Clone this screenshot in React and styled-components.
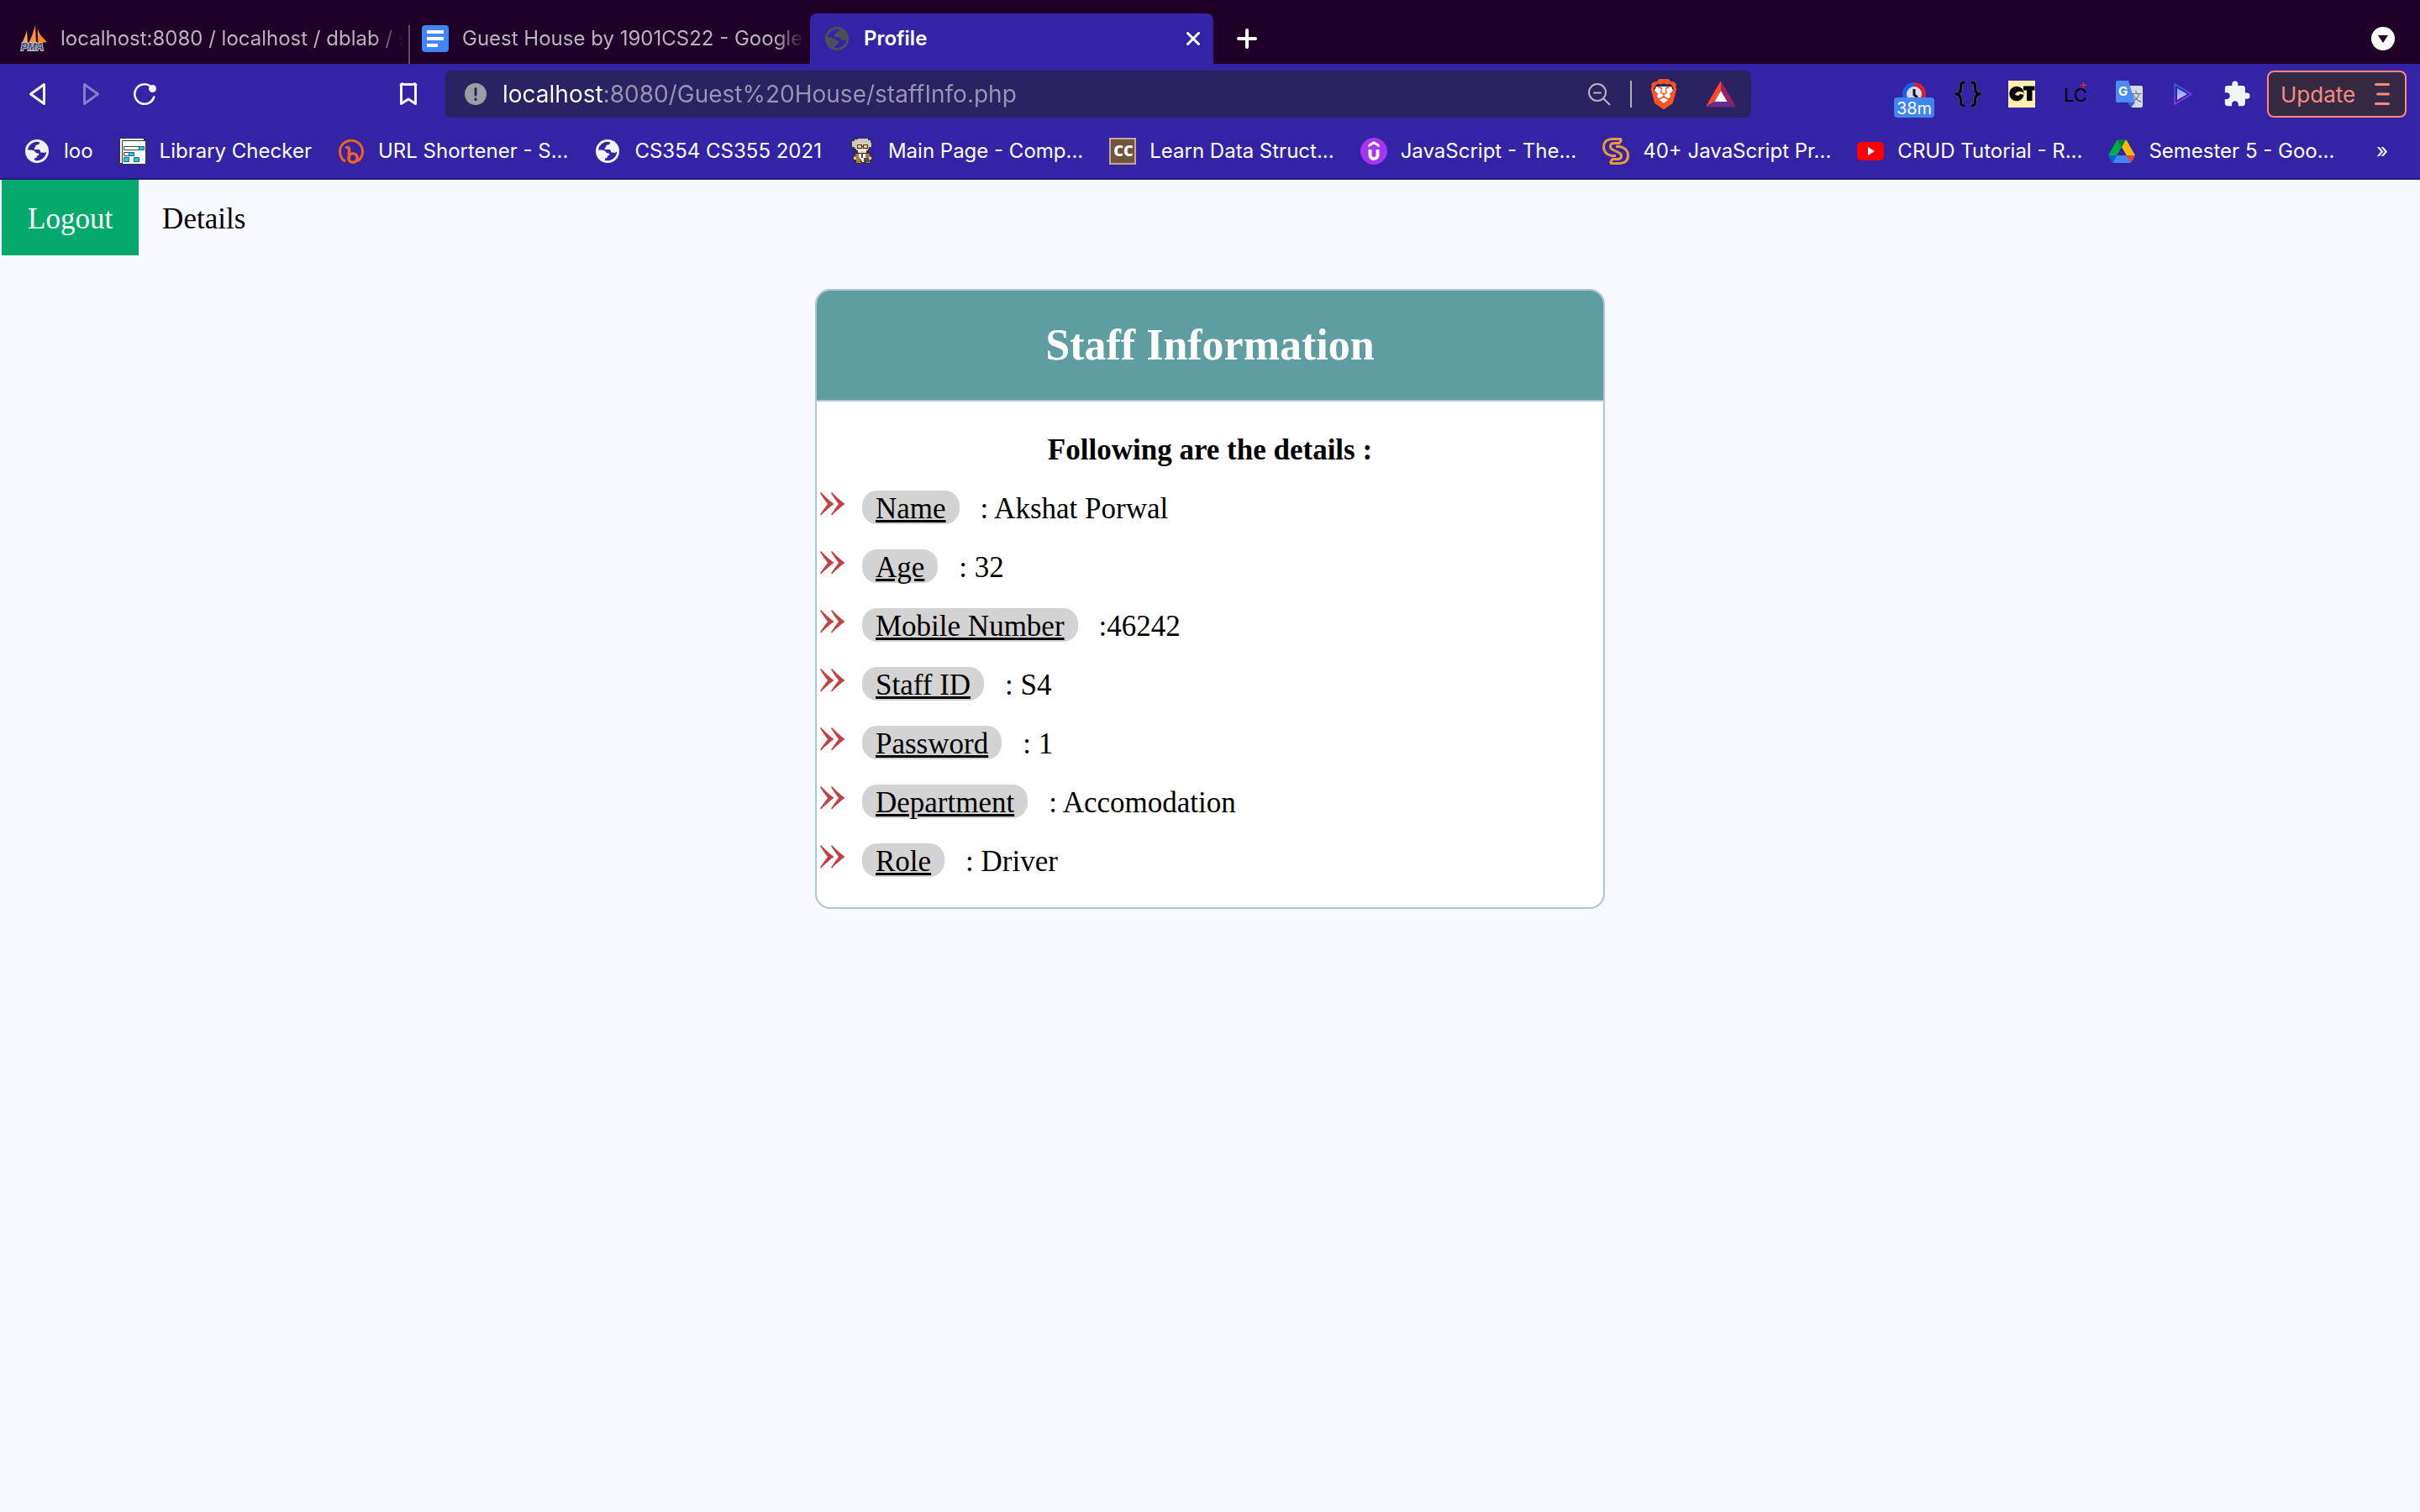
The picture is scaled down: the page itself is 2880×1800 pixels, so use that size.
import React from "react";
import styled, { createGlobalStyle } from "styled-components";
import { MdExtension } from "react-icons/md";
import { SiBrave } from "react-icons/si";

const UI_FONT = `Inter, "Liberation Sans", sans-serif`;
const PAGE_FONT = `"Liberation Serif", "Times New Roman", serif`;

const GlobalStyle = createGlobalStyle`
  *, *::before, *::after { box-sizing: border-box; }
  body { margin: 0; background: #f8f8ff; }
  a { color: inherit; text-decoration: none; }
  button { border: 0; padding: 0; background: none; color: inherit; font: inherit; cursor: pointer; }
  svg { display: block; flex: none; }
`;

/* ---------- browser frame ---------- */

const Browser = styled.header`
  font-family: ${UI_FONT};
  color: #fff;
  background: #3423a4;
  border-bottom: 2px solid #24187a;
`;

const TabStrip = styled.div`
  display: flex;
  align-items: flex-end;
  height: 76px;
  padding-left: 8px;
  background: #1f0029;
`;

const Tab = styled.div`
  display: flex;
  align-items: center;
  gap: 16px;
  flex: 0 1 ${(p) => (p.$active ? "480px" : "478px")};
  min-width: 0;
  height: 60px;
  padding: 0 ${(p) => (p.$active ? "16px" : "6px")} 0 16px;
  font-size: 24px;
  line-height: 32px;
  font-weight: ${(p) => (p.$active ? 600 : 400)};
  color: ${(p) => (p.$active ? "#fff" : "#bcb2bf")};
  border-radius: 8px 8px 0 0;
  background: ${(p) =>
    p.$active
      ? "#3423a4"
      : p.$divided
        ? "linear-gradient(#624c69, #624c69) left bottom / 2px 46px no-repeat"
        : "none"};
`;

const TabTitle = styled.span`
  flex: 1;
  min-width: 0;
  overflow: hidden;
  white-space: nowrap;
  mask-image: ${(p) =>
    p.$fade ? "linear-gradient(to left, transparent, #000 36px)" : "none"};
`;

const StripButton = styled.button`
  display: grid;
  place-items: center;
  width: 32px;
  height: 60px;
  margin-left: ${(p) => (p.$end ? "auto" : "24px")};
  margin-right: ${(p) => (p.$end ? "28px" : "0")};
`;

const CloseButton = styled.button`
  display: grid;
  place-items: center;
  width: 16px;
  height: 32px;
`;

const Toolbar = styled.div`
  display: flex;
  align-items: center;
  height: 72px;
  padding: 0 16px 0 12px;
`;

const ToolButton = styled.button`
  position: relative;
  display: grid;
  place-items: center;
  flex: none;
  width: 64px;
  height: 56px;
`;

const SaveButton = styled(ToolButton)`
  margin-left: 250px;
  margin-right: 12px;
`;

const AddressBar = styled.label`
  display: flex;
  align-items: center;
  flex: 1;
  min-width: 0;
  height: 56px;
  padding: 0 18px 0 22px;
  gap: 18px;
  border-radius: 8px;
  background: #2b2261;
`;

const AddressInput = styled.input`
  flex: 1;
  min-width: 0;
  height: 40px;
  padding: 0;
  border: 0;
  outline: 0;
  font-family: ${UI_FONT};
  font-size: 28px;
  color: transparent;
  background: linear-gradient(90deg, #fff 120px, #9a94b6 120px);
  background-clip: text;
`;

const AddressActions = styled.span`
  display: flex;
  align-items: center;
  gap: 22px;
`;

const Rule = styled.span`
  width: 2px;
  height: 32px;
  background: #b4b0b6;
`;

const Shields = styled.span`
  display: flex;
  align-items: center;
  gap: 34px;
`;

const Extensions = styled.div`
  display: flex;
  margin-left: 162px;
`;

const Badge = styled.span`
  position: absolute;
  left: 8px;
  bottom: 0;
  width: 48px;
  height: 24px;
  border-radius: 4px;
  background: #4285f0;
  font-size: 20px;
  line-height: 26px;
  text-align: center;
`;

const UpdateButton = styled.button`
  display: flex;
  align-items: center;
  justify-content: space-between;
  width: 166px;
  height: 56px;
  margin-left: 4px;
  padding: 0 17px 0 14px;
  border: 2px solid #f68b80;
  border-radius: 8px;
  background: #352943;
  color: #f68b80;
  font-size: 26px;
`;

const BookmarkBar = styled.nav`
  display: flex;
  align-items: center;
  height: 64px;
  padding: 0 38px 0 28px;
  gap: 31px;
`;

const Bookmark = styled.a`
  display: flex;
  align-items: center;
  gap: 16px;
  font-size: 24px;
  line-height: 32px;
  white-space: nowrap;
`;

const MoreButton = styled.button`
  margin-left: auto;
  font-size: 24px;
  line-height: 32px;
`;

/* ---------- icons ---------- */

const Icon = ({ w = 32, h = w, children, ...rest }) => (
  <svg width={w} height={h} viewBox={`0 0 ${w} ${h}`} fill="none" aria-hidden="true" {...rest}>
    {children}
  </svg>
);

const Globe = ({ color = "#f1f3f4", cut = "#3423a4" }) => (
  <Icon>
    <circle cx="16" cy="16" r="14" fill={color} />
    <path fill={cut} d="M5 14.5A11.200 11.200 0 0 1 19 5.200C19 7.600 18 8.400 15.600 8.600C13.800 8.800 14.800 11.200 13.200 12C11.600 12.800 12.400 14 14 14H17.800C20 14 20.200 16.200 20.200 17.600H23C24.600 18.600 26 17.400 27.200 16.500A11.200 11.200 0 0 1 13 26.800V24.400C15 24.200 16.200 23.400 16 21.400C18 21.400 18.600 20.600 18.200 18.800C16.600 18.400 14.600 18.600 13.800 16.600C12.600 14.400 8 14.500 5 14.500Z" />
  </Icon>
);

const PmaIcon = () => (
  <Icon>
    <path fill="#f7a64a" d="M8 6L9 22H2C4 17 6.500 12 8 6Z" />
    <path fill="#fb9333" d="M18 0L19 22H10C13 15 16 8 18 0Z" />
    <path fill="#f98a1f" d="M21 4C23 12 27 15 32 20L20 22Z" />
    <path stroke="#1f0029" d="M19.500 2L21 21" />
    <text x="1" y="30" fontFamily="Liberation Sans, sans-serif" fontSize="12" fontWeight="700" fontStyle="italic" fill="#3c4770" stroke="#c9cbd6" strokeWidth="2" paintOrder="stroke">PMA</text>
  </Icon>
);

const DocsIcon = () => (
  <Icon>
    <rect width="32" height="32" rx="4" fill="#4285f4" />
    <path fill="#fff" d="M6 6h20v4H6zM6 14h20v4H6zM6 22h13v4H6z" />
  </Icon>
);

const LibraryIcon = () => (
  <Icon>
    <path fill="#fff" stroke="#333" d="M.5.5H29.500V30.500H.5Z" />
    <path fill="#fff" stroke="#333" d="M3.500 3.500H31.500V31.500H3.500Z" />
    <path fill="#fff" stroke="#444" d="M5.500 10.500H29.500V14.500H5.500ZM5.500 17.500H17.500V21.500H5.500Z" />
    <path fill="#1fc8ea" stroke="#256b7c" d="M23.500 10.500H29.500V14.500H23.500ZM11.500 17.500H17.500V21.500H11.500ZM5.500 23.500H11.500V28.500H5.500ZM17.500 23.500H23.500V28.500H17.500Z" />
  </Icon>
);

const BitlyIcon = () => (
  <Icon>
    <path stroke="#ee6123" strokeWidth="3" strokeLinecap="round" d="M8 27.500A13.500 13.500 0 1 1 24 27.500" />
    <path stroke="#ee6123" strokeWidth="3.500" strokeLinecap="round" d="M10.500 11.500C13 11 13.500 12 13.500 14V24" />
    <circle cx="18" cy="24" r="5.200" stroke="#ee6123" strokeWidth="3.500" />
  </Icon>
);

const ProfessorIcon = () => (
  <Icon shapeRendering="crispEdges">
    <path fill="#38322f" d="M8 1H11V0H25V2H28V5H29V12H27V14H25V18H27V21H29V27H27V31H9V27H6V21H8V18H11V15H8V14H5V11H3V4H5V2H8Z" />
    <path fill="#c9c9c9" d="M8 2H12V1H24V3H27V6H28V11H25V13H8V11H5V4H8Z" />
    <path fill="#f0c7a0" d="M10 6H24V15H22V18H12V15H10Z" />
    <path stroke="#333" d="M11 8.500H16V12.500H11ZM18 8.500H23V12.500H18ZM16 10.500H18" />
    <path fill="#fff" d="M12 14H22V17H19V16H15V17H12ZM13 19H21V29H17L13 22Z" />
    <path fill="#a87c3c" d="M9 19H13V22L16 30H10V26H7V22H9ZM21 19H26V22H28V26H26V30H22Z" />
    <path fill="#f0c7a0" d="M7 23H10V26H7ZM25 23H28V26H25Z" />
    <path fill="#c22" d="M16 19H18V24H16Z" />
    <path fill="#4a4a72" d="M19 24H25V29H19Z" />
  </Icon>
);

const CcIcon = () => (
  <Icon>
    <rect x="1" y="1" width="30" height="30" fill="#73543e" stroke="#c3a894" strokeWidth="2" />
    <text x="17" y="22" textAnchor="middle" fontFamily="Open Sans, sans-serif" fontSize="18" fontWeight="800" fill="#fff">CC</text>
  </Icon>
);

const UdemyIcon = () => (
  <Icon>
    <circle cx="16" cy="16" r="16" fill="#a435f0" />
    <path fill="#fff" d="M16 4L22.500 8V11.500L16 7.500L9.500 11.500V8Z" />
    <path stroke="#fff" strokeWidth="4" d="M11.500 14V20.500C11.500 26.500 20.500 26.500 20.500 20.500V14" />
  </Icon>
);

const SIcon = () => (
  <Icon stroke="#e79b35" strokeWidth="3">
    <path d="M23 1.500H11C4 2 1.500 6 1.500 11C1.500 16 5 20 11 21.500H16" />
    <path d="M23 2L20 6.500H13C9 7 8 12 12 14L16 16" />
    <path d="M9 30.500H21C28 30 30.500 26 30.500 21C30.500 16 27 12 21 10.500H16" />
    <path d="M9 30L12 25.500H19C23 25 24 20 20 18L16 16" />
  </Icon>
);

const YoutubeIcon = () => (
  <Icon>
    <rect y="5" width="32" height="22" rx="5" fill="#f00" />
    <path fill="#fff" d="M13 11L21 16L13 21Z" />
  </Icon>
);

const DriveIcon = () => (
  <svg width="32" height="28" viewBox="0 0 87.300 78" aria-hidden="true">
    <path fill="#0066da" d="m6.600 66.850 3.850 6.650c.8 1.400 1.950 2.500 3.300 3.300l13.750-23.800h-27.500c0 1.550.4 3.100 1.200 4.500z" />
    <path fill="#00ac47" d="m43.650 25-13.750-23.800c-1.350.8-2.500 1.900-3.300 3.300l-25.400 44a9.060 9.060 0 0 0-1.200 4.500h27.500z" />
    <path fill="#ea4335" d="m73.550 76.800c1.350-.8 2.500-1.900 3.300-3.300l1.600-2.750 7.650-13.250c.8-1.400 1.200-2.950 1.200-4.500h-27.502l5.852 11.500z" />
    <path fill="#00832d" d="m43.650 25 13.750-23.800c-1.350-.8-2.900-1.200-4.500-1.200h-18.500c-1.600 0-3.150.45-4.500 1.200z" />
    <path fill="#4285f4" d="m59.800 53h-32.300l-13.750 23.800c1.350.8 2.900 1.200 4.500 1.200h50.800c1.600 0 3.150-.45 4.500-1.200z" />
    <path fill="#ffba00" d="m73.400 26.500-12.700-22c-.8-1.400-1.950-2.500-3.300-3.300l-13.750 23.800 16.150 28h27.450c0-1.550-.4-3.100-1.200-4.500z" />
  </svg>
);

const TriangleIcon = ({ flip }) => (
  <Icon w={28} stroke={flip ? "#877dc9" : "#f5f4fb"} strokeWidth="3" strokeLinejoin="round">
    <path d={flip ? "M6.500 2.500L22.500 14L6.500 25.500Z" : "M22.500 2.500L6.500 14L22.500 25.500Z"} />
  </Icon>
);

const ReloadIcon = () => (
  <Icon w={28}>
    <path stroke="#f5f4fb" strokeWidth="2.600" strokeLinecap="round" d="M25.200 17.500A11.700 11.700 0 1 1 20 4" />
    <circle cx="23.500" cy="7.500" r="4.500" fill="#f5f4fb" />
  </Icon>
);

const SaveIcon = () => (
  <Icon w={28} stroke="#f5f4fb" strokeWidth="3" strokeLinejoin="round">
    <path d="M7.500 2.500H20.500A1 1 0 0 1 22.500 4V25.500L14 20L5.500 25.500V4A1 1 0 0 1 7.500 2.500Z" />
  </Icon>
);

const InfoIcon = () => (
  <Icon w={28}>
    <circle cx="14" cy="14" r="13" fill="#9a9fa5" />
    <path stroke="#2b2261" strokeWidth="3" strokeLinecap="round" d="M14 7.500V15M14 20V20.500" />
  </Icon>
);

const ZoomOutIcon = () => (
  <Icon w={28} stroke="#bab6bc" strokeWidth="2" strokeLinecap="round">
    <circle cx="11" cy="12" r="10" />
    <path d="M7 12.500H15M18.500 19.500L25.500 26.500" />
  </Icon>
);

const BraveIcon = () => (
  <Icon w={32} h={36}>
    <path fill="#fff" d="M7 9H25L27 14L22 27L16 32L10 27L5 14Z" />
    <SiBrave x="-2" y="0" size={36} color="#fb5420" />
  </Icon>
);

const BatIcon = () => (
  <Icon w={36} h={32}>
    <path fill="#ff4724" d="M18 0V12L10.500 25L0 31Z" />
    <path fill="#9e1f63" d="M18 0V12L25.500 25L36 31Z" />
    <path fill="#662d91" d="M10.500 25H25.500L36 31.500H0Z" />
    <path fill="#fff" d="M18 12L25.500 25H10.500Z" />
  </Icon>
);

const ClockIcon = () => (
  <Icon>
    <path fill="#1b5fe0" d="M16 2A14 14 0 0 0 16 30Z" />
    <path fill="#cf2434" d="M16 2A14 14 0 0 1 16 30Z" />
    <circle cx="16" cy="16" r="9" fill="#dcd9f2" />
    <path stroke="#111" strokeWidth="3" d="M16 10V17L20 20" />
  </Icon>
);

const BracesIcon = () => (
  <Icon>
    <g stroke="#5a5470" strokeWidth="4.500">
      <path d="M12 2C7 2 7.500 5 7.500 9C7.500 13 6 16 1 16C6 16 7.500 19 7.500 23C7.500 27 7 30 12 30" />
      <path d="M20 2C25 2 24.500 5 24.500 9C24.500 13 26 16 31 16C26 16 24.500 19 24.500 23C24.500 27 25 30 20 30" />
    </g>
    <g stroke="#000" strokeWidth="3">
      <path d="M12 2C7 2 7.500 5 7.500 9C7.500 13 6 16 1 16C6 16 7.500 19 7.500 23C7.500 27 7 30 12 30" />
      <path d="M20 2C25 2 24.500 5 24.500 9C24.500 13 26 16 31 16C26 16 24.500 19 24.500 23C24.500 27 25 30 20 30" />
    </g>
  </Icon>
);

const CtIcon = () => (
  <Icon>
    <rect width="32" height="32" fill="#ffeeb0" />
    <circle cx="10" cy="15.500" r="8.700" fill="#000" />
    <path fill="#ffeeb0" d="M8 17C9 13 13 12 18 14L19 17L14 16L12 18Z" />
    <path d="M18 6.500H31.500V11.500H28.500V24H22V11.500H18Z" fill="#000" />
  </Icon>
);

const LcIcon = () => (
  <Icon>
    <text x="2" y="25" fontFamily="Inter, sans-serif" fontSize="22" fill="#000">LC</text>
    <path stroke="#e02040" strokeWidth="1.500" d="M22 5.500H29M25.500 2V9" />
  </Icon>
);

const TranslateIcon = () => (
  <Icon>
    <path fill="#d9dade" d="M14 6H30A2 2 0 0 1 32 8V30A2 2 0 0 1 30 32H19Z" />
    <text x="17" y="24" fontFamily="Noto Sans CJK SC, sans-serif" fontSize="14" fill="#607988">文</text>
    <path fill="#3a63c8" d="M14 26H23L18 32Z" />
    <path fill="#4c8bf5" d="M2 0H15L23 26H2A2 2 0 0 1 0 24V2A2 2 0 0 1 2 0Z" />
    <text x="3" y="18" fontFamily="Inter, sans-serif" fontSize="15" fontWeight="700" fill="#fff">G</text>
  </Icon>
);

const PlayIcon = () => (
  <Icon>
    <defs>
      <linearGradient id="edge" x1="0" y1="0" x2="0" y2="1">
        <stop offset="0" stopColor="#2a63e6" />
        <stop offset="1" stopColor="#a52de0" />
      </linearGradient>
      <linearGradient id="core" x1="0" y1="0" x2="0" y2="1">
        <stop offset="0" stopColor="#5fb2f4" />
        <stop offset="1" stopColor="#e2b6f6" />
      </linearGradient>
    </defs>
    <path stroke="url(#edge)" strokeWidth="1.500" strokeLinejoin="round" d="M6 4L26 16L6 28Z" />
    <path fill="url(#core)" d="M9 9L21 16L9 23Z" />
  </Icon>
);

const MenuIcon = () => (
  <Icon w={20} h={28} stroke="#f68b80" strokeWidth="3" strokeLinecap="round">
    <path d="M2.500 2.500H17.500M4.500 14H17.500M2.500 25.500H17.500" />
  </Icon>
);

const Chevrons = () => (
  <Icon w={30} h={28} fill="#c04242">
    <path d="M0 1L1 0C6 5 11 10 16.500 14C11 18 6 22.500 1 27.500L0 26.500C3 22 6 18 9 14C6 10 3 6 0 1Z" />
    <path d="M13 1L14 0C19 5 24 10 29.500 14C24 18 19 22.500 14 27.500L13 26.500C16 22 19 18 22 14C19 10 16 6 13 1Z" />
  </Icon>
);

/* ---------- page ---------- */

const TopNav = styled.nav`
  display: flex;
  padding-left: 2px;
  font-family: ${PAGE_FONT};
  font-size: 35px;
  line-height: 40px;
`;

const NavLink = styled.a`
  padding: 27px ${(p) => (p.$primary ? "31px" : "28px")} 23px;
  color: ${(p) => (p.$primary ? "#fff" : "#000")};
  background: ${(p) => (p.$primary ? "#04aa6d" : "none")};
`;

const Card = styled.main`
  width: 940px;
  max-width: 100%;
  margin: 40px auto;
  border: 2px solid #b0c4de;
  border-radius: 18px;
  overflow: hidden;
  background: #fff;
  color: #000;
  font-family: ${PAGE_FONT};
  font-size: 35px;
`;

const CardTitle = styled.h1`
  margin: 0;
  padding: 35px 0;
  border-bottom: 2px solid #b0c4de;
  background: #5f9ea0;
  color: #fff;
  font-size: 52px;
  line-height: 60px;
  text-align: center;
`;

const CardBody = styled.section`
  padding: 21px 4px;
`;

const Lead = styled.h2`
  margin: 0;
  padding-top: 4px;
  font-size: 35px;
  line-height: 66px;
  text-align: center;
`;

const Details = styled.ul`
  margin: 0;
  padding: 0;
  list-style: none;
`;

const Detail = styled.li`
  display: flex;
  align-items: center;
  height: 70px;
`;

const Bullet = styled.span`
  padding-bottom: 8px;
  margin-right: 20px;
`;

const Term = styled.span`
  padding: 4px 16px 0;
  margin-right: 25px;
  border-radius: 18px;
  background: #d3d3d3;
  line-height: 36px;
  text-decoration: underline;
`;

const Value = styled.span`
  padding-top: 4px;
  line-height: 36px;
`;

const bookmarks = [
  ["loo", Globe],
  ["Library Checker", LibraryIcon],
  ["URL Shortener - S...", BitlyIcon],
  ["CS354 CS355 2021", Globe],
  ["Main Page - Comp...", ProfessorIcon],
  ["Learn Data Struct...", CcIcon],
  ["JavaScript - The...", UdemyIcon],
  ["40+ JavaScript Pr...", SIcon],
  ["CRUD Tutorial - R...", YoutubeIcon],
  ["Semester 5 - Goo...", DriveIcon],
];

const details = [
  ["Name", ": Akshat Porwal"],
  ["Age", ": 32"],
  ["Mobile Number", ":46242"],
  ["Staff ID", ": S4"],
  ["Password", ": 1"],
  ["Department", ": Accomodation"],
  ["Role", ": Driver"],
];

export default function App() {
  return (
    <>
      <GlobalStyle />
      <Browser>
        <TabStrip>
          <Tab>
            <PmaIcon />
            <TabTitle $fade>localhost:8080 / localhost / dblab / s</TabTitle>
          </Tab>
          <Tab $divided>
            <DocsIcon />
            <TabTitle $fade>Guest House by 1901CS22 - Google</TabTitle>
          </Tab>
          <Tab $active>
            <Globe color="#4d5156" />
            <TabTitle>Profile</TabTitle>
            <CloseButton aria-label="Close tab">
              <Icon w={16} stroke="#fff" strokeWidth="3" strokeLinecap="round">
                <path d="M1.500 1.500L14.500 14.500M14.500 1.500L1.500 14.500" />
              </Icon>
            </CloseButton>
          </Tab>
          <StripButton aria-label="New tab">
            <Icon w={24} stroke="#fff" strokeWidth="4" strokeLinecap="round">
              <path d="M12 2V22M2 12H22" />
            </Icon>
          </StripButton>
          <StripButton $end aria-label="Search tabs">
            <Icon w={28}>
              <circle cx="14" cy="14" r="14" fill="#fff" />
              <path fill="#1f0029" d="M8 10H20L14 19Z" />
            </Icon>
          </StripButton>
        </TabStrip>

        <Toolbar>
          <ToolButton aria-label="Back"><TriangleIcon /></ToolButton>
          <ToolButton aria-label="Forward"><TriangleIcon flip /></ToolButton>
          <ToolButton aria-label="Reload"><ReloadIcon /></ToolButton>
          <SaveButton aria-label="Bookmark this page"><SaveIcon /></SaveButton>
          <AddressBar>
            <InfoIcon />
            <AddressInput
              aria-label="Address"
              defaultValue="localhost:8080/Guest%20House/staffInfo.php"
            />
            <AddressActions>
              <ZoomOutIcon />
              <Rule />
              <Shields>
                <BraveIcon />
                <BatIcon />
              </Shields>
            </AddressActions>
          </AddressBar>
          <Extensions>
            <ToolButton aria-label="Timer">
              <ClockIcon />
              <Badge>38m</Badge>
            </ToolButton>
            <ToolButton aria-label="JSON viewer"><BracesIcon /></ToolButton>
            <ToolButton aria-label="CT"><CtIcon /></ToolButton>
            <ToolButton aria-label="LC"><LcIcon /></ToolButton>
            <ToolButton aria-label="Translate"><TranslateIcon /></ToolButton>
            <ToolButton aria-label="Player"><PlayIcon /></ToolButton>
            <ToolButton aria-label="Extensions"><MdExtension size={34} color="#f1f3f4" /></ToolButton>
          </Extensions>
          <UpdateButton>
            Update
            <MenuIcon />
          </UpdateButton>
        </Toolbar>

        <BookmarkBar aria-label="Bookmarks">
          {bookmarks.map(([label, Glyph]) => (
            <Bookmark href="#" key={label}>
              <Glyph />
              {label}
            </Bookmark>
          ))}
          <MoreButton aria-label="More bookmarks">»</MoreButton>
        </BookmarkBar>
      </Browser>

      <TopNav>
        <NavLink href="#" $primary>Logout</NavLink>
        <NavLink href="#">Details</NavLink>
      </TopNav>

      <Card>
        <CardTitle>Staff Information</CardTitle>
        <CardBody>
          <Lead>Following are the details :</Lead>
          <Details>
            {details.map(([term, value]) => (
              <Detail key={term}>
                <Bullet><Chevrons /></Bullet>
                <Term>{term}</Term>
                <Value>{value}</Value>
              </Detail>
            ))}
          </Details>
        </CardBody>
      </Card>
    </>
  );
}
